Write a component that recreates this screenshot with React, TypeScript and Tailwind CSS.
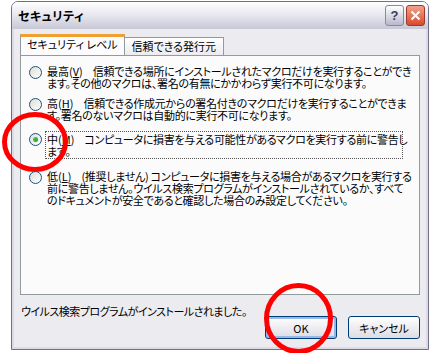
import React from "react";

const jp = "font-['MS_UI_Gothic','Noto_Sans_CJK_JP',sans-serif] [font-feature-settings:'palt']";

function Radio({ checked }: { checked?: boolean }) {
  return (
    <span className="flex h-[13px] w-[13px] shrink-0 items-center justify-center rounded-full border border-[#1c5180] bg-gradient-to-br from-[#dcdcd7] to-white">
      {checked && (
        <span className="h-[5px] w-[5px] rounded-full bg-gradient-to-br from-[#55d055] to-[#1a9a1a]" />
      )}
    </span>
  );
}

const options = [
  {
    key: "V",
    head: "最高",
    gap: "",
    lines: [
      "信頼できる場所にインストールされたマクロだけを実行することができ",
      "ます。その他のマクロは、署名の有無にかかわらず実行不可になります。",
    ],
  },
  {
    key: "H",
    head: "高",
    gap: "mt-[9px]",
    lines: [
      "信頼できる作成元からの署名付きのマクロだけを実行することができま",
      "す。署名のないマクロは自動的に実行不可になります。",
    ],
  },
  {
    key: "M",
    head: "中",
    gap: "mt-[12px]",
    checked: true,
    lines: ["コンピュータに損害を与える可能性があるマクロを実行する前に警告し", "ます。"],
  },
  {
    key: "L",
    head: "低",
    gap: "mt-[12px]",
    lines: [
      "(推奨しません) コンピュータに損害を与える場合があるマクロを実行する",
      "前に警告しません。ウイルス検索プログラムがインストールされているか、すべて",
      "のドキュメントが安全であると確認した場合のみ設定してください。",
    ],
  },
];

export default function App() {
  return (
    <div className={`relative h-[353px] w-[431px] overflow-hidden bg-white text-[11px] leading-[12px] text-black ${jp}`}>
      <div className="ml-[11px] mt-[1px] flex h-[349px] w-[418px] flex-col rounded-t-[7px] border border-[#6f6f8a]">
        {/* title bar */}
        <div className="flex h-[27px] items-center rounded-t-[6px] bg-gradient-to-b from-white via-[#e6e6ee] to-[#c8c8d6] pl-[6px] pr-[3px]">
          <span className="text-[12px] font-bold tracking-[0.5px]">セキュリティ</span>
          <div className="ml-auto flex gap-[2px]">
            <div className="flex h-[21px] w-[19px] items-center justify-center rounded-[3px] border border-[#8888a0] bg-gradient-to-b from-white to-[#b8b8cc] font-['Liberation_Sans',sans-serif] text-[13px] font-bold text-[#3a3a5a]">
              ?
            </div>
            <div className="flex h-[21px] w-[19px] items-center justify-center rounded-[3px] border border-[#9a3a2a] bg-gradient-to-b from-[#f2a08a] to-[#d8482c]">
              <svg width="11" height="11" viewBox="0 0 11 11">
                <path d="M1.5 1.5 L9.5 9.5 M9.5 1.5 L1.5 9.5" stroke="white" strokeWidth="2" />
              </svg>
            </div>
          </div>
        </div>

        {/* body */}
        <div className="flex flex-1 flex-col border-x-2 border-b-2 border-[#dcdce6] bg-[#ebebf0] px-[6px] pt-[5px]">
          <div className="flex items-end">
            <div className="h-[21px] border-x border-t-[3px] border-[#919b9c] border-t-[#f0a030] bg-[#fcfcfe] px-[6px] pt-[1px]">
              セキュリティ レベル
            </div>
            <div className="h-[18px] border-r border-t border-[#919b9c] bg-gradient-to-b from-white to-[#ecebf0] px-[7px] pt-[2px]">
              信頼できる発行元
            </div>
          </div>
          <div className="h-[240px] border border-[#919b9c] bg-[#fbfbfc] pl-[8px] pt-[10px] tracking-[-0.3px]">
            <div className="flex flex-col">
              {options.map((o) => (
                <div key={o.key} className={`flex gap-[3px] ${o.gap}`}>
                  <Radio checked={o.checked} />
                  <div
                    className={`whitespace-nowrap ${
                      o.checked ? "-mt-[2px] w-[358px] border border-dotted border-[#555] px-[1px] py-[1px]" : "-mt-[1px] px-[2px]"
                    }`}
                  >
                    {o.lines.map((l, j) => (
                      <div key={j}>
                        {j === 0 && (
                          <span className="mr-[10px] tracking-normal">
                            {o.head}(<span className="underline">{o.key}</span>)
                          </span>
                        )}
                        {l}
                      </div>
                    ))}
                  </div>
                </div>
              ))}
            </div>
          </div>

          {/* footer */}
          <div className="mt-[10px] pl-[1px] tracking-[-0.5px]">ウイルス検索プログラムがインストールされました。</div>
          <div className="-mt-[1px] flex justify-end gap-[11px]">
            <button className="h-[23px] w-[72px] rounded-[3px] border border-[#003c74] bg-gradient-to-b from-white to-[#dcdce4] text-[11px] shadow-[inset_0_0_0_2px_#98b8ea]">
              OK
            </button>
            <button className="h-[23px] w-[72px] rounded-[3px] border border-[#003c74] bg-gradient-to-b from-white to-[#dcdce4] text-[11px]">
              キャンセル
            </button>
          </div>
        </div>
      </div>

      {/* red annotation circles */}
      <svg className="pointer-events-none absolute left-0 top-0" width="431" height="353">
        <ellipse cx="35" cy="142" rx="30.5" ry="27.5" fill="none" stroke="#f00" strokeWidth="5" />
        <ellipse cx="298.5" cy="318.5" rx="32" ry="33" fill="none" stroke="#f00" strokeWidth="5" />
      </svg>
    </div>
  );
}
